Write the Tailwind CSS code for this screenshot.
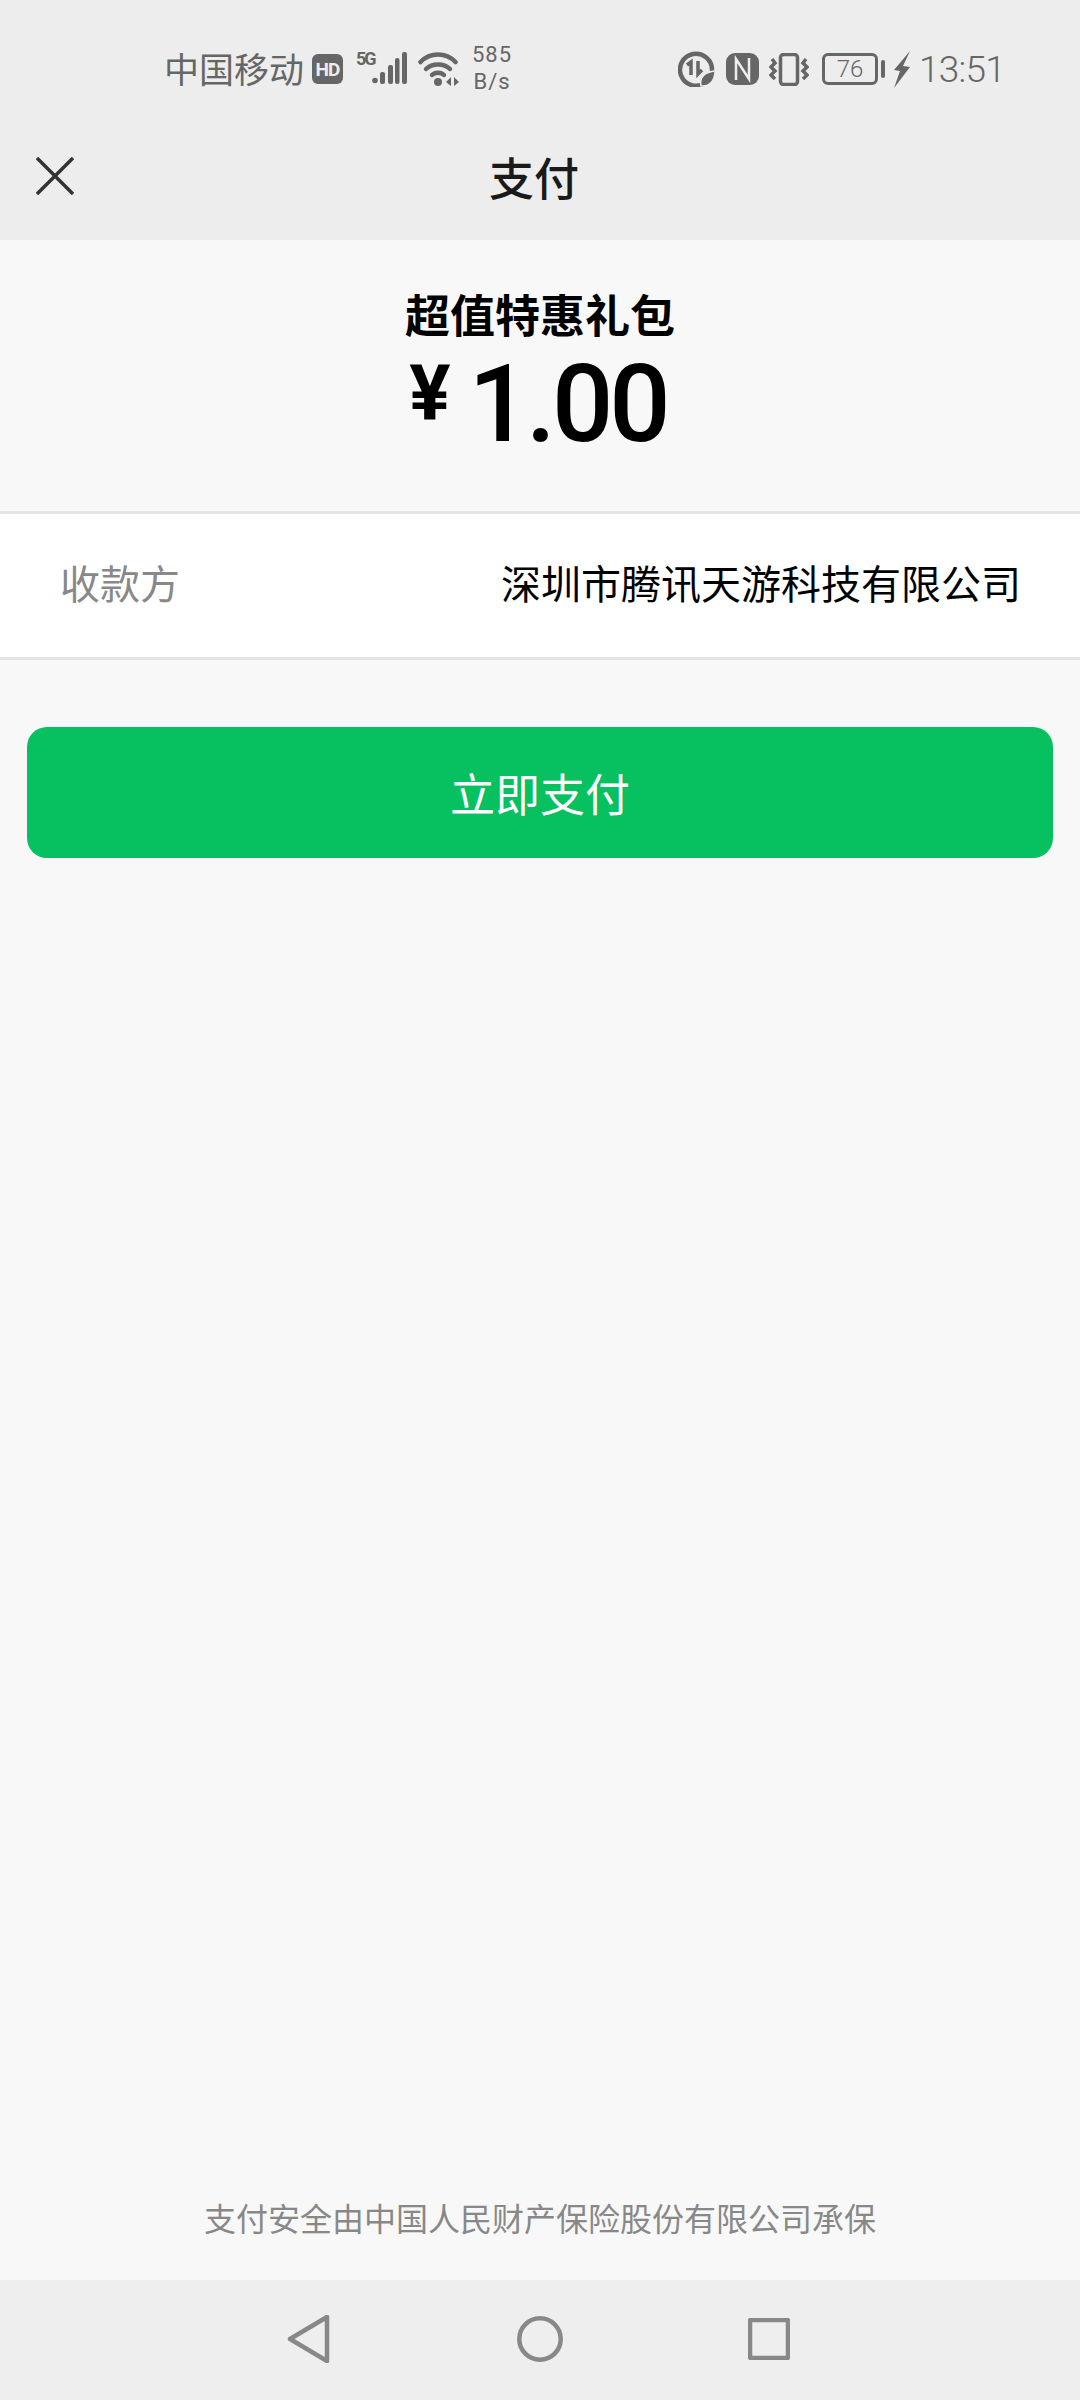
<!DOCTYPE html>
<html lang="zh-CN">
  <head>
    <meta charset="UTF-8" />
    <meta name="viewport" content="width=device-width, initial-scale=1.0" />
    <title>支付</title>
    <script src="https://cdn.jsdelivr.net/npm/@tailwindcss/browser@4"></script>
  </head>
  <body class="font-['Roboto','Noto_Sans_CJK_SC',sans-serif]">
    <div class="w-[1080px] h-[2400px] flex flex-col bg-[#f8f8f8] overflow-hidden">
      <!-- Status bar + title -->
      <header class="h-[240px] shrink-0 bg-[#ededed]">
        <div class="h-[138px] flex items-center pl-[164px] text-[#666666]">
          <span class="w-[148px] mt-[-3px] font-['Noto_Sans_CJK_SC',sans-serif] text-[35px] leading-none whitespace-nowrap">中国移动</span>
          <span class="w-[31px] h-[30px] flex items-center justify-center rounded-[6px] bg-[#666666] text-[#ededed] text-[19px] leading-none font-bold tracking-[-1px]">HD</span>
          <span class="relative w-[52px] h-[34px] ml-[13px]">
            <span class="absolute left-0 top-[-2px] text-[18px] leading-none font-bold tracking-[-2px]">5G</span>
            <svg class="absolute left-[15px] top-0" width="37" height="33" viewBox="0 0 37 33" fill="#666666">
              <circle cx="4" cy="28.5" r="2.8" />
              <rect x="9" y="20" width="5" height="12" rx="2" />
              <rect x="17" y="13" width="5" height="19" rx="2" />
              <rect x="24" y="6" width="4.5" height="26" rx="2" />
              <rect x="31" y="0" width="5" height="32" rx="2" />
            </svg>
          </span>
          <svg class="ml-[10px]" width="41" height="34" viewBox="0 0 41 34" fill="none" stroke="#666666" stroke-width="4.5" stroke-linecap="round">
            <path d="M2.5 10 C12 0 28 0 37.5 10" />
            <path d="M8 17 C14 11 26 11 32 17" />
            <path d="M14 23 C17 20 23 20 26 23" />
            <circle cx="20" cy="30" r="4" fill="#666666" stroke="none" />
            <path d="M28 30 L33 25 L33 34 Z M41 30 L36 25 L36 34 Z" fill="#666666" stroke="none" />
          </svg>
          <span class="w-[40px] ml-[13px] flex flex-col items-center text-[22px] leading-[27px] tracking-[1px] mt-[-3px]">
            <span>585</span>
            <span>B/s</span>
          </span>
          <svg class="ml-[166px]" width="37" height="36" viewBox="0 0 37 36" fill="none" stroke="#666666">
            <path d="M27 32 A16 16 0 1 1 34 19" stroke-width="4.5" stroke-linecap="round" />
            <path d="M13 24 V11 L9 14 M20 10 V23 L24 19" stroke-width="3.5" />
            <path d="M23 35 C21 25 28 21 37 20 C37 29 32 36 23 35 Z" fill="#666666" stroke="#ededed" stroke-width="1.5" />
          </svg>
          <svg class="ml-[11px]" width="33" height="32" viewBox="0 0 33 32">
            <rect width="33" height="32" rx="9" fill="#666666" />
            <path d="M10 27 V6 L23 26 V5" fill="none" stroke="#ededed" stroke-width="2.5" />
          </svg>
          <svg class="ml-[10px]" width="40" height="33" viewBox="0 0 40 33" fill="none" stroke="#666666">
            <rect x="11.5" y="1.5" width="17" height="30" rx="3" stroke-width="3.5" />
            <path d="M3 6 L6 10 L2 14 L6 18 L2 22 L6 26 M37 6 L34 10 L38 14 L34 18 L38 22 L34 26" stroke-width="3.5" />
          </svg>
          <span class="relative ml-[13px] w-[56px] h-[32px] rounded-[6px] border-[3px] border-[#666666] flex items-center justify-center text-[24px] leading-none font-light">76</span>
          <span class="ml-[3px] w-[4px] h-[18px] rounded-[2px] bg-[#666666]"></span>
          <svg class="ml-[8px]" width="17" height="37" viewBox="0 0 17 37" fill="#666666">
            <path d="M17 0 L1 19 L7 20 L1 37 L17 16 L10 15 Z" />
          </svg>
          <span class="ml-[9px] text-[37px] leading-none font-light tracking-[-0.8px]">13:51</span>
        </div>
        <div class="h-[76px] flex items-center pl-[36px]">
          <svg width="38" height="38" viewBox="0 0 38 38" fill="none" stroke="#333333" stroke-width="3.5">
            <path d="M1 1 L37 37 M37 1 L1 37" />
          </svg>
          <span class="ml-[415px] font-['Noto_Sans_CJK_SC',sans-serif] text-[45px] leading-none font-medium text-[#1a1a1a]">支付</span>
        </div>
      </header>

      <!-- Product and price -->
      <section class="h-[271px] shrink-0 flex flex-col items-center">
        <h1 class="mt-[48px] font-['Noto_Sans_CJK_SC',sans-serif] text-[45px] leading-[52px] font-bold text-black">超值特惠礼包</h1>
        <div class="mt-[11px] ml-[-4px] flex items-start text-black">
          <span class="text-[77px] leading-[86px] font-bold mr-[18px]">¥</span>
          <span class="mt-[2px] text-[108px] leading-[102px] font-medium tracking-[-4px]">1.00</span>
        </div>
      </section>

      <!-- Payee -->
      <section class="h-[149px] shrink-0 flex items-center justify-between pl-[60px] pr-[59px] pb-[7px] bg-white border-y-[3px] border-[#e5e5e5] font-['Noto_Sans_CJK_SC',sans-serif] text-[40px] leading-none">
        <span class="text-[#888888]">收款方</span>
        <span class="text-black">深圳市腾讯天游科技有限公司</span>
      </section>

      <main class="flex-1 flex flex-col items-center px-[27px] pt-[67px] pb-[41px]">
        <button class="w-full h-[131px] rounded-[20px] bg-[#07c160] text-white font-['Noto_Sans_CJK_SC',sans-serif] text-[45px] leading-none">立即支付</button>
        <p class="mt-auto font-['Noto_Sans_CJK_SC',sans-serif] text-[32px] leading-[44px] text-[#888888]">支付安全由中国人民财产保险股份有限公司承保</p>
      </main>

      <!-- Navigation bar -->
      <nav class="h-[120px] shrink-0 bg-[#eeeeee] flex items-center pl-[287px] pb-[2px]">
        <svg width="44" height="48" viewBox="0 0 44 48" fill="none" stroke="#888888" stroke-width="4.5" stroke-linejoin="round">
          <path d="M3 24 L40 2 V46 Z" />
        </svg>
        <svg class="ml-[186px]" width="46" height="46" viewBox="0 0 46 46" fill="none" stroke="#888888" stroke-width="4.5">
          <circle cx="23" cy="23" r="20.7" />
        </svg>
        <svg class="ml-[185px]" width="42" height="42" viewBox="0 0 42 42" fill="none" stroke="#888888" stroke-width="4.5" stroke-linejoin="round">
          <rect x="2" y="2" width="38" height="38" rx="1" />
        </svg>
      </nav>
    </div>
  </body>
</html>
